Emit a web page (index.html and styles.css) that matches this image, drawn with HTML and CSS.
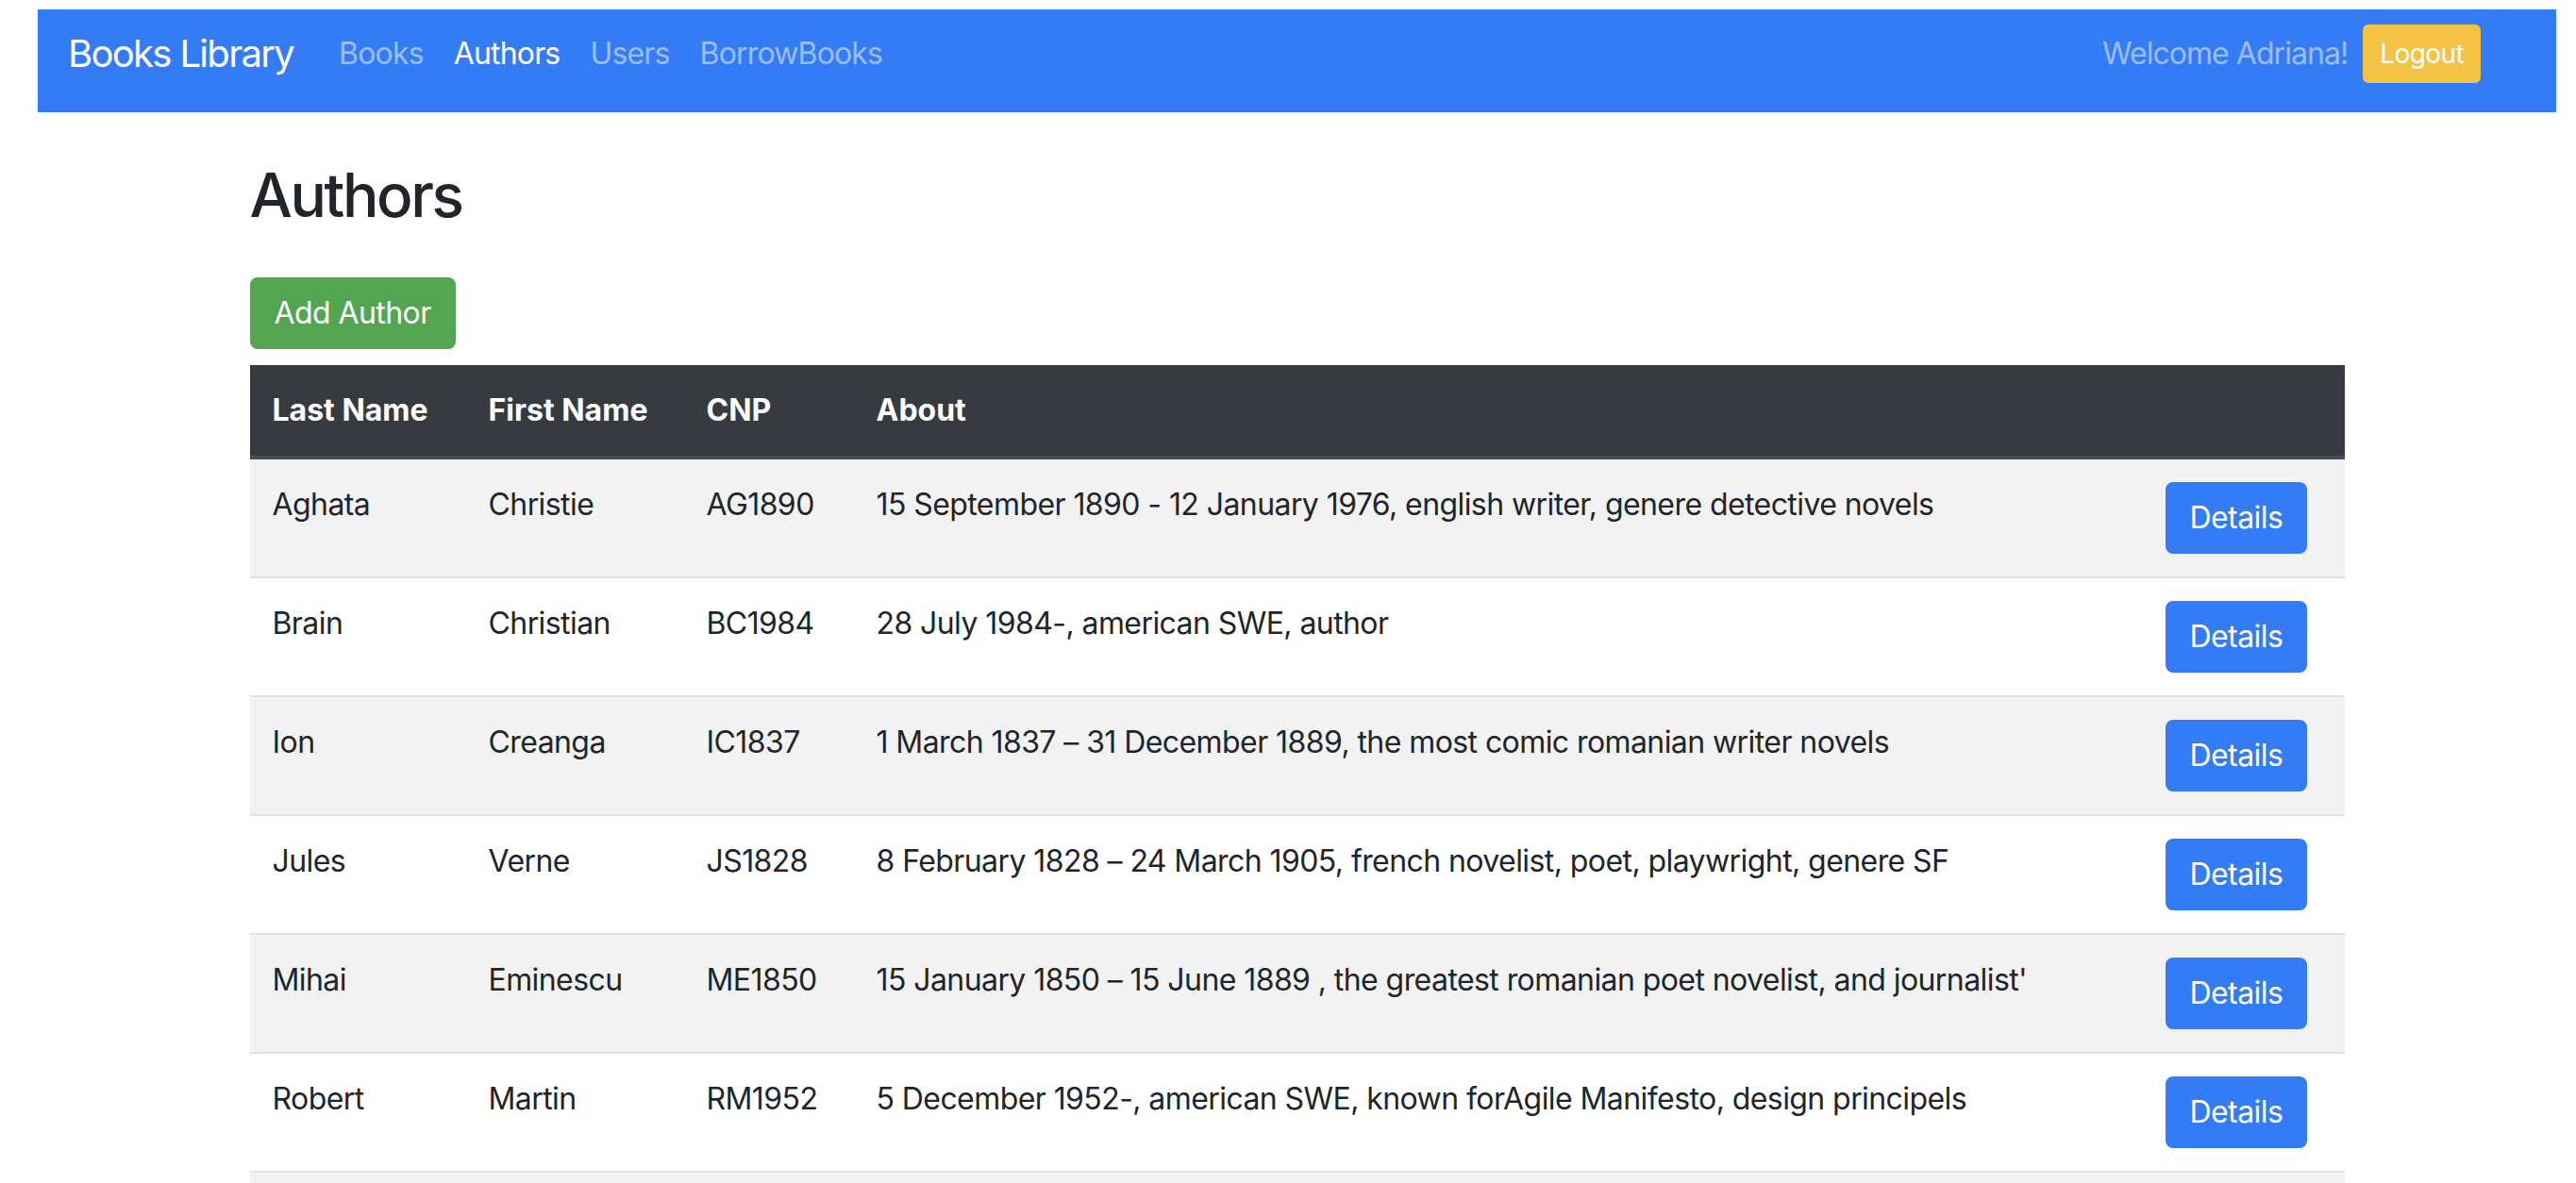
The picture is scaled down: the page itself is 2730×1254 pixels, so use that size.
FILE: index.html
```html
<!DOCTYPE html>
<html lang="en">
<head>
<meta charset="utf-8">
<title>Authors - Books Library</title>
<link rel="stylesheet" href="styles.css">
</head>
<body>
<div class="page">
  <nav class="navbar">
    <a class="brand" href="#">Books Library</a>
    <ul class="nav">
      <li><a class="nav-link" href="#">Books</a></li>
      <li><a class="nav-link active" href="#">Authors</a></li>
      <li><a class="nav-link" href="#">Users</a></li>
      <li><a class="nav-link" href="#">BorrowBooks</a></li>
    </ul>
    <div class="nav-right">
      <span class="nav-link welcome">Welcome Adriana!</span>
      <a class="btn btn-sm btn-warning" href="#">Logout</a>
    </div>
  </nav>

  <main class="container">
    <h2 class="title">Authors</h2>
    <a class="btn btn-success" href="#">Add Author</a>

    <table class="table">
      <colgroup>
        <col class="c-last">
        <col class="c-first">
        <col class="c-cnp">
        <col class="c-about">
        <col class="c-act">
      </colgroup>
      <thead>
        <tr>
          <th>Last Name</th>
          <th>First Name</th>
          <th>CNP</th>
          <th>About</th>
          <th></th>
        </tr>
      </thead>
      <tbody>
        <tr>
          <td>Aghata</td>
          <td>Christie</td>
          <td>AG1890</td>
          <td>15 September 1890 - 12 January 1976, english writer, genere detective novels</td>
          <td><a class="btn btn-primary" href="#">Details</a></td>
        </tr>
        <tr>
          <td>Brain</td>
          <td>Christian</td>
          <td>BC1984</td>
          <td>28 July 1984-, american SWE, author</td>
          <td><a class="btn btn-primary" href="#">Details</a></td>
        </tr>
        <tr>
          <td>Ion</td>
          <td>Creanga</td>
          <td>IC1837</td>
          <td>1 March 1837 – 31 December 1889, the most comic romanian writer novels</td>
          <td><a class="btn btn-primary" href="#">Details</a></td>
        </tr>
        <tr>
          <td>Jules</td>
          <td>Verne</td>
          <td>JS1828</td>
          <td>8 February 1828 – 24 March 1905, french novelist, poet, playwright, genere SF</td>
          <td><a class="btn btn-primary" href="#">Details</a></td>
        </tr>
        <tr>
          <td>Mihai</td>
          <td>Eminescu</td>
          <td>ME1850</td>
          <td>15 January 1850 – 15 June 1889 , the greatest romanian poet novelist, and journalist'</td>
          <td><a class="btn btn-primary" href="#">Details</a></td>
        </tr>
        <tr>
          <td>Robert</td>
          <td>Martin</td>
          <td>RM1952</td>
          <td>5 December 1952-, american SWE, known forAgile Manifesto, design principels</td>
          <td><a class="btn btn-primary" href="#">Details</a></td>
        </tr>
        <tr class="row-more">
          <td></td>
          <td></td>
          <td></td>
          <td></td>
          <td></td>
        </tr>
      </tbody>
    </table>
  </main>
</div>
</body>
</html>
```

FILE: styles.css
```css
* {
  box-sizing: border-box;
}

html, body {
  margin: 0;
  padding: 0;
  background: #ffffff;
}

body {
  font-family: Inter, "Noto Sans", "Liberation Sans", sans-serif;
  font-size: 32px;
  line-height: 1.5;
  color: #212529;
  letter-spacing: -0.018em;
}

a {
  text-decoration: none;
}

.page {
  padding: 10px 21px 0 40px;
}

/* ---------- navbar ---------- */
.navbar {
  display: flex;
  align-items: center;
  background: #347cf6;
  padding: 16px 80px 31px 32px;
}

.brand {
  color: #ffffff;
  font-size: 40px;
  line-height: 62px;
  margin-right: 32px;
  white-space: nowrap;
  letter-spacing: -0.042em;
}

.nav {
  display: flex;
  list-style: none;
  margin: 0;
  padding: 0;
}

.nav-link {
  display: block;
  padding: 0 16px;
  font-size: 32px;
  line-height: 48px;
  color: #9bbefa;
  white-space: nowrap;
  letter-spacing: -0.026em;
}

.nav-link.welcome {
  letter-spacing: -0.03em;
}

.nav-link.active {
  color: #ffffff;
}

.nav-right {
  margin-left: auto;
  display: flex;
  align-items: center;
}

/* ---------- buttons ---------- */
.btn {
  display: inline-block;
  color: #ffffff;
  font-size: 32px;
  line-height: 48px;
  padding: 12px 24px;
  border: 2px solid transparent;
  border-radius: 8px;
  white-space: nowrap;
}

.btn-sm {
  font-size: 28px;
  line-height: 42px;
  padding: 8px 16px;
  border-radius: 6px;
}

.btn-warning {
  background: #f5c344;
  border-color: #f5c344;
}

.btn-success {
  background: #53a552;
  border-color: #53a552;
}

.btn-primary {
  background: #347cf6;
  border-color: #347cf6;
}

/* ---------- content ---------- */
.container {
  width: 2220px;
  margin: 0 auto;
}

.title {
  font-size: 64px;
  font-weight: 500;
  line-height: 1.2;
  margin: 50px 0 48px;
  color: #212529;
  letter-spacing: -0.038em;
}

.table {
  width: 100%;
  table-layout: fixed;
  border-collapse: collapse;
  margin-top: 17px;
}

.c-last { width: 229px; }
.c-first { width: 231px; }
.c-cnp { width: 180px; }
.c-about { width: 1366px; }
.c-act { width: 214px; }

.table th {
  background: #373b40;
  color: #ffffff;
  font-weight: 700;
  text-align: left;
  padding: 24px;
  line-height: 48px;
  border-bottom: 4px solid #474d55;
  vertical-align: bottom;
  letter-spacing: 0;
}

.table td {
  padding: 24px;
  line-height: 48px;
  border-top: 2px solid #dee2e6;
  vertical-align: top;
}

.table tbody tr:nth-child(odd) {
  background: #f2f2f2;
}

.table .row-more td {
  height: 126px;
}
```
